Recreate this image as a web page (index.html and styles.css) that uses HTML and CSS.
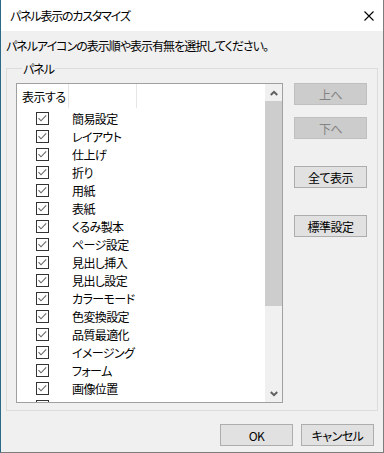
FILE: index.html
```html
<!DOCTYPE html>
<html lang="ja">
<head>
<meta charset="utf-8">
<title>パネル表示のカスタマイズ</title>
<link rel="stylesheet" href="styles.css">
</head>
<body>
<div class="window">
  <div class="titlebar">
    <span class="title">パネル表示のカスタマイズ</span>
    <svg class="close" width="10" height="10" viewBox="0 0 10 10"><path d="M0.5 0.5 L9.5 9.5 M9.5 0.5 L0.5 9.5" stroke="#000" stroke-width="1.1" fill="none"/></svg>
  </div>
  <div class="content">
    <p class="intro">パネルアイコンの表示順や表示有無を選択してください。</p>
    <fieldset class="group">
      <legend>パネル</legend>
      <div class="group-body">
        <div class="list">
          <div class="list-main">
            <div class="list-header">
              <div class="col col1">表示する</div>
              <div class="col col2"></div>
            </div>
            <div class="rows">
              <div class="row"><span class="cb"></span><span class="label">簡易設定</span></div>
              <div class="row"><span class="cb"></span><span class="label">レイアウト</span></div>
              <div class="row"><span class="cb"></span><span class="label">仕上げ</span></div>
              <div class="row"><span class="cb"></span><span class="label">折り</span></div>
              <div class="row"><span class="cb"></span><span class="label">用紙</span></div>
              <div class="row"><span class="cb"></span><span class="label">表紙</span></div>
              <div class="row"><span class="cb"></span><span class="label">くるみ製本</span></div>
              <div class="row"><span class="cb"></span><span class="label">ページ設定</span></div>
              <div class="row"><span class="cb"></span><span class="label">見出し挿入</span></div>
              <div class="row"><span class="cb"></span><span class="label">見出し設定</span></div>
              <div class="row"><span class="cb"></span><span class="label">カラーモード</span></div>
              <div class="row"><span class="cb"></span><span class="label">色変換設定</span></div>
              <div class="row"><span class="cb"></span><span class="label">品質最適化</span></div>
              <div class="row"><span class="cb"></span><span class="label">イメージング</span></div>
              <div class="row"><span class="cb"></span><span class="label">フォーム</span></div>
              <div class="row"><span class="cb"></span><span class="label">画像位置</span></div>
              <div class="row"><span class="cb"></span></div>
            </div>
          </div>
          <div class="scrollbar">
            <div class="sb-btn"><svg width="8" height="6" viewBox="0 0 8 6"><path d="M0.8 5 L4 1.8 L7.2 5" stroke="#606060" stroke-width="2" fill="none"/></svg></div>
            <div class="sb-track"><div class="sb-thumb"></div></div>
            <div class="sb-btn"><svg width="8" height="6" viewBox="0 0 8 6"><path d="M0.8 1 L4 4.2 L7.2 1" stroke="#606060" stroke-width="2" fill="none"/></svg></div>
          </div>
        </div>
        <div class="side">
          <button class="btn" disabled>上へ</button>
          <button class="btn btn-down" disabled>下へ</button>
          <button class="btn btn-gap">全て表示</button>
          <button class="btn btn-gap">標準設定</button>
        </div>
      </div>
    </fieldset>
    <div class="footer">
      <button class="btn">OK</button>
      <button class="btn">キャンセル</button>
    </div>
  </div>
</div>
</body>
</html>
```
FILE: styles.css
```css
* { box-sizing: border-box; }
html, body { margin: 0; padding: 0; background: #f0f0f0; }
body {
  font-family: "Noto Sans CJK JP", "Noto Sans", sans-serif;
  font-size: 12px;
  line-height: 15px;
  color: #000;
  font-feature-settings: "palt";
  letter-spacing: -1px;
}
.window {
  width: 384px;
  height: 453px;
  display: flex;
  flex-direction: column;
  background: #f0f0f0;
  border-left: 1px solid #2b6a86;
  border-right: 1px solid #7d7d7d;
  border-bottom: 1px solid #7d7d7d;
}
.titlebar {
  height: 31px;
  flex: none;
  background: #fff;
  display: flex;
  align-items: center;
  padding-left: 9px;
  padding-right: 9px;
}
.title { letter-spacing: -1.2px; }
.close { margin-left: auto; margin-top: 1px; }
.content {
  flex: 1;
  padding: 7px 5px 0 5px;
  display: flex;
  flex-direction: column;
}
.intro { margin: 0; height: 15px; }
.group {
  margin: 8px 0 0 0;
  padding: 7px 10px 7px 9px;
  border: 1px solid #dcdcdc;
  min-width: 0;
}
.group legend {
  margin-left: 6px;
  padding: 0 1px;
  line-height: 15px;
}
.group-body {
  display: flex;
  gap: 11px;
}
.list {
  width: 267px;
  height: 320px;
  border: 1px solid #a0a0a0;
  background: #fff;
  display: flex;
}
.list-main {
  flex: 1;
  overflow: hidden;
  display: flex;
  flex-direction: column;
}
.list-header {
  height: 24px;
  flex: none;
  display: flex;
}
.col {
  height: 24px;
  border-right: 1px solid #e5e5e5;
  padding-left: 5px;
  display: flex;
  align-items: center;
}
.col1 { width: 52px; letter-spacing: -0.5px; }
.col2 { width: 68px; }
.rows { flex: 1; overflow: hidden; padding-top: 1px; }
.row {
  height: 18px;
  display: flex;
  align-items: center;
}
.cb {
  width: 13px;
  height: 13px;
  margin-left: 19px;
  border: 1px solid #333;
  background: #fff url("data:image/svg+xml;utf8,<svg xmlns='http://www.w3.org/2000/svg' width='11' height='11' viewBox='0 0 11 11'><path d='M1.5 5.2 L4 7.8 L9.2 2.4' stroke='%23666' stroke-width='1.1' fill='none'/></svg>") no-repeat center;
  flex: none;
}
.label { margin-left: 23px; letter-spacing: -0.6px; }
.scrollbar {
  width: 17px;
  flex: none;
  display: flex;
  flex-direction: column;
  background: #f0f0f0;
}
.sb-btn {
  height: 17px;
  flex: none;
  display: flex;
  align-items: center;
  justify-content: center;
}
.sb-track { flex: 1; }
.sb-thumb {
  height: 205px;
  background: #cdcdcd;
}
.side {
  display: flex;
  flex-direction: column;
  width: 73px;
}
.btn {
  width: 73px;
  height: 22px;
  padding: 0;
  font: inherit;
  font-feature-settings: "palt";
  letter-spacing: -0.5px;
  line-height: 15px;
  color: #000;
  background: #e1e1e1;
  border: 1px solid #adadad;
  border-radius: 0;
}
.btn:disabled {
  background: #cccccc;
  border-color: #bfbfbf;
  color: #838383;
}
.btn-down { margin-top: 12px; }
.btn-gap { margin-top: 27px; }
.footer {
  display: flex;
  justify-content: flex-end;
  gap: 8px;
  margin-top: 13px;
  padding-right: 4px;
}
```
